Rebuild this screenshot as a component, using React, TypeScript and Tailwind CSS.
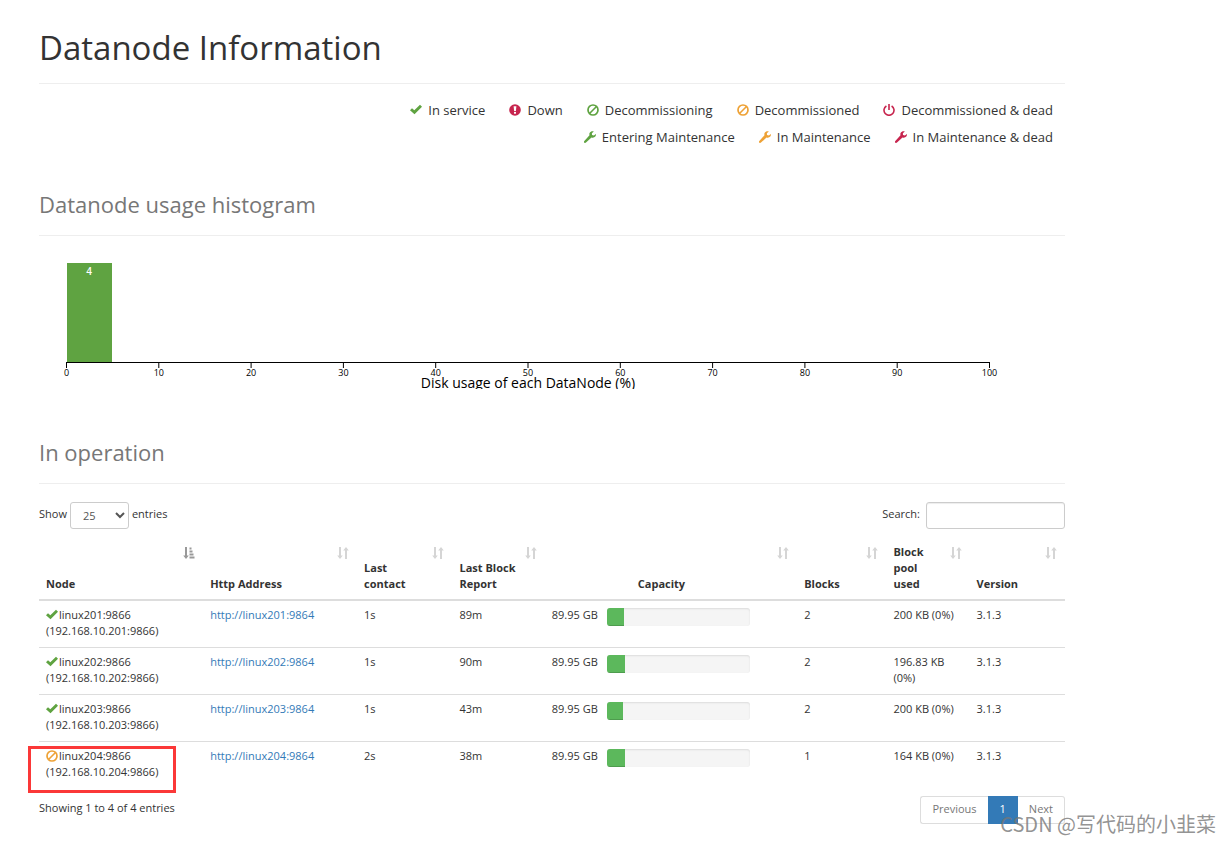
import React from "react";

type IconName = "ok" | "down" | "ban" | "off" | "wrench";

const Icon: React.FC<{ name: IconName; className?: string }> = ({ name, className = "" }) => (
  <svg viewBox="0 0 12 12" fill="currentColor" aria-hidden="true" className={`inline-block shrink-0 ${className}`}>
    {name === "ok" && <path d="M0 6.2 2 4.2 4.3 6.3 10 .8 12 2.8 4.5 10.3Z" />}
    {name === "down" && (
      <>
        <circle cx="6" cy="6" r="5.8" />
        <path d="M4.6 2.2h2.8L6.9 6.9H5.1Z" fill="#fff" />
        <rect x="5" y="7.9" width="2" height="1.8" fill="#fff" />
      </>
    )}
    {name === "ban" && (
      <>
        <circle cx="6" cy="6" r="5" fill="none" stroke="currentColor" strokeWidth="1.7" />
        <path d="M2.5 9.5 9.5 2.5" stroke="currentColor" strokeWidth="1.6" />
      </>
    )}
    {name === "off" && (
      <>
        <path d="M3.4 2A5 5 0 1 0 8.6 2" fill="none" stroke="currentColor" strokeWidth="1.6" />
        <rect x="5.2" y="0" width="1.6" height="6" />
      </>
    )}
    {name === "wrench" && (
      <path d="M11.9 2.9 9.9 4.4 8 3.9 7.9 2.3 9.8.4C8.2-.1 6.4.4 5.6 1.9 5.2 2.7 5.3 3.5 5.5 4.2L.3 9.9C-.2 10.5-.1 11.2.3 11.7.8 12.1 1.5 12.1 2 11.6L7.5 6.4C8.8 6.9 10.4 6.6 11.3 5.5 11.9 4.8 12.1 3.8 11.9 2.9Z" />
    )}
  </svg>
);

const SortIcon: React.FC<{ sorted?: boolean }> = ({ sorted }) => (
  <svg
    viewBox="0 0 12 12"
    fill="currentColor"
    aria-hidden="true"
    className={`absolute right-2 top-[10px] h-3 w-3 ${sorted ? "text-[#999]" : "text-[#d5d5d5]"}`}
  >
    <path d="M2 0h2v8.5h1.8L3 12 .2 8.5H2Z" />
    {sorted ? (
      <path d="M6.5.5h2v2h-2ZM6.5 3.5h3v2h-3ZM6.5 6.5h4v2h-4ZM6.5 9.5h5v2h-5Z" />
    ) : (
      <path d="M8 12h2V3.5h1.8L9 0 6.2 3.5H8Z" />
    )}
  </svg>
);

const legend: { icon: IconName; color: string; label: string }[][] = [
  [
    { icon: "ok", color: "text-[#5fa341]", label: "In service" },
    { icon: "down", color: "text-[#c7254e]", label: "Down" },
    { icon: "ban", color: "text-[#5fa341]", label: "Decommissioning" },
    { icon: "ban", color: "text-[#eea236]", label: "Decommissioned" },
    { icon: "off", color: "text-[#c7254e]", label: "Decommissioned & dead" },
  ],
  [
    { icon: "wrench", color: "text-[#5fa341]", label: "Entering Maintenance" },
    { icon: "wrench", color: "text-[#eea236]", label: "In Maintenance" },
    { icon: "wrench", color: "text-[#c7254e]", label: "In Maintenance & dead" },
  ],
];

const columns = [
  { title: "Node", width: "w-[16%]" },
  { title: "Http Address", width: "w-[15%]" },
  { title: "Last contact", width: "w-[9.3%]" },
  { title: "Last Block Report", width: "w-[9%]" },
  { title: "Capacity", width: "w-[24.6%]" },
  { title: "Blocks", width: "w-[8.7%]" },
  { title: "Block pool used", width: "w-[8.1%]" },
  { title: "Version", width: "w-[9.3%]" },
];

const nodes = [
  { id: 201, contact: "1s", report: "89m", used: 12, blocks: 2, pool: "200 KB (0%)", active: true },
  { id: 202, contact: "1s", report: "90m", used: 13, blocks: 2, pool: "196.83 KB (0%)", active: true },
  { id: 203, contact: "1s", report: "43m", used: 11, blocks: 2, pool: "200 KB (0%)", active: true },
  { id: 204, contact: "2s", report: "38m", used: 13, blocks: 1, pool: "164 KB (0%)", active: false },
];

const ticks = [0, 10, 20, 30, 40, 50, 60, 70, 80, 90, 100];

const Histogram: React.FC = () => (
  <svg viewBox="0 0 1026 135" className="mt-[18px] block w-full" role="img" aria-label="Datanode usage histogram">
    <rect x="28" y="9" width="45" height="99" fill="#5fa341" />
    <text x="50" y="21" fill="#fff" fontSize="10" fontWeight="600" textAnchor="middle">
      4
    </text>
    <path d="M27.5 114v-5.5h923v5.5" fill="none" stroke="#000" />
    {ticks.map((tick) => (
      <g key={tick} transform={`translate(${27.5 + tick * 9.23} 108)`}>
        <path d="M0 0v6" stroke="#000" />
        <text y="14" fontSize="9" textAnchor="middle">
          {tick}
        </text>
      </g>
    ))}
    <text x="489" y="134" fontSize="14" textAnchor="middle">
      Disk usage of each DataNode (%)
    </text>
  </svg>
);

const DatanodeTable: React.FC = () => (
  <table className="mt-2 w-full table-fixed border-collapse text-left">
    <thead>
      <tr className="border-b-2 border-[#ddd]">
        {columns.map(({ title, width }, i) => (
          <th
            key={title}
            className={`relative py-[7px] pl-[7px] pr-[26px] align-bottom font-bold ${width} ${
              title === "Capacity" ? "text-center" : ""
            }`}
          >
            {title}
            <SortIcon sorted={i === 0} />
          </th>
        ))}
      </tr>
    </thead>
    <tbody>
      {nodes.map((node) => (
        <tr key={node.id} className="border-t border-[#ddd] align-top">
          <td className="relative px-[7px] pb-2 pt-[6px]">
            <div className="flex items-center">
              <Icon
                name={node.active ? "ok" : "ban"}
                className={`mr-px h-3 w-3 ${node.active ? "text-[#5fa341]" : "text-[#eea236]"}`}
              />
              <span>linux{node.id}:9866</span>
            </div>
            <div>(192.168.10.{node.id}:9866)</div>
            {!node.active && (
              <div className="pointer-events-none absolute -left-[11px] top-1 h-[47px] w-[148px] border-[3px] border-[#fb3838]" />
            )}
          </td>
          <td className="px-[7px] pb-2 pt-[6px]">
            <a href={`http://linux${node.id}:9864`} className="text-[#337ab7]">
              http://linux{node.id}:9864
            </a>
          </td>
          <td className="px-[7px] pb-2 pt-[6px]">{node.contact}</td>
          <td className="px-[7px] pb-2 pt-[6px]">{node.report}</td>
          <td className="px-[7px] pb-2 pt-[6px]">
            <div className="flex">
              <span className="w-[55px] shrink-0 whitespace-nowrap">89.95 GB</span>
              <div className="mt-px h-[18px] w-[143px] overflow-hidden rounded-[3px] bg-[#f5f5f5] shadow-[inset_0_1px_2px_rgba(0,0,0,0.1)]">
                <div
                  className="h-full bg-[#5cb85c] shadow-[inset_0_-1px_0_rgba(0,0,0,0.15)]"
                  style={{ width: `${node.used}%` }}
                />
              </div>
            </div>
          </td>
          <td className="px-[7px] pb-2 pt-[6px]">{node.blocks}</td>
          <td className="px-[7px] pb-2 pt-[6px]">{node.pool}</td>
          <td className="px-[7px] pb-2 pt-[6px]">3.1.3</td>
        </tr>
      ))}
    </tbody>
  </table>
);

const App: React.FC = () => (
  <div className="relative bg-white pb-[18px] pl-[39px] pr-[167px] font-['Open_Sans','Noto_Sans_CJK_SC',sans-serif] text-[11px] leading-4 text-[#333]">
    <h1 className="border-b border-[#eee] pb-[15px] pt-7 text-[33px] leading-10">Datanode Information</h1>

    <div className="mt-3 pr-3 text-[13px]">
      {legend.map((row, i) => (
        <ul key={i} className="flex h-[27px] items-center justify-end gap-6">
          {row.map(({ icon, color, label }) => (
            <li key={label} className="flex items-center gap-[6px]">
              <Icon name={icon} className={`h-3 w-3 ${color}`} />
              {label}
            </li>
          ))}
        </ul>
      ))}
    </div>

    <h2 className="mt-[39px] border-b border-[#eee] pb-4 text-[22px] leading-[30px] text-[#777]">
      Datanode usage histogram
    </h2>
    <Histogram />

    <h2 className="mt-12 border-b border-[#eee] pb-4 text-[22px] leading-[30px] text-[#777]">In operation</h2>

    <div className="mt-[18px] flex items-center justify-between">
      <label className="flex items-center gap-[3px]">
        <span className="pb-1">Show</span>
        <select
          defaultValue="25"
          className="h-[27px] w-[59px] rounded-[3px] border border-[#ccc] bg-white pl-2 text-[11px] text-[#555]"
        >
          <option>10</option>
          <option>25</option>
          <option>50</option>
          <option>100</option>
        </select>
        <span className="pb-1">entries</span>
      </label>
      <label className="flex items-center gap-[6px]">
        <span className="pb-1">Search:</span>
        <input
          type="search"
          className="h-[27px] w-[139px] rounded-[3px] border border-[#ccc] px-2 shadow-[inset_0_1px_1px_rgba(0,0,0,0.075)]"
        />
      </label>
    </div>

    <DatanodeTable />

    <div className="mt-2 flex items-start justify-between">
      <p className="mt-1">Showing 1 to 4 of 4 entries</p>
      <nav className="flex h-7 text-[#777]">
        <button type="button" className="rounded-l-[3px] border border-r-0 border-[#ddd] px-[11px] pb-[2px]">
          Previous
        </button>
        <button type="button" className="bg-[#337ab7] px-3 pb-[2px] text-white">
          1
        </button>
        <button type="button" className="rounded-r-[3px] border border-l-0 border-[#ddd] px-[11px] pb-[2px]">
          Next
        </button>
      </nav>
    </div>

    <div className="pointer-events-none absolute bottom-1 right-4 whitespace-nowrap font-['Noto_Sans_CJK_SC',sans-serif] text-[20px] leading-7 text-[#777]/80">
      CSDN @写代码的小韭菜
    </div>
  </div>
);

export default App;
